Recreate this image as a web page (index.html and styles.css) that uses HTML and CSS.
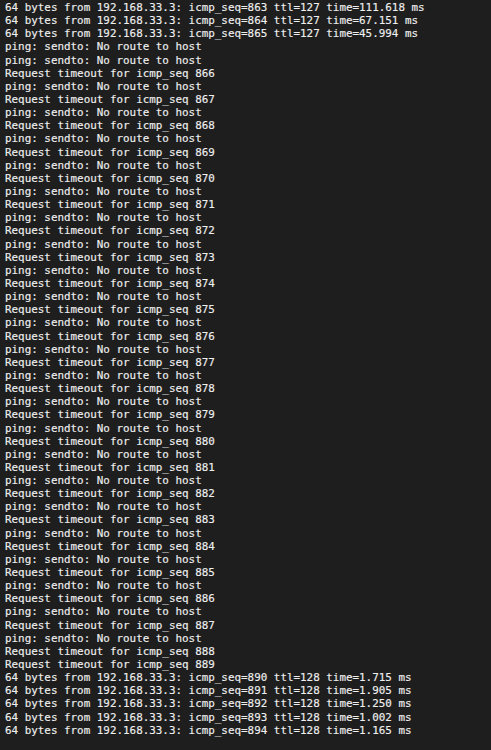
FILE: index.html
```html
<!DOCTYPE html>
<html>
<head>
<meta charset="utf-8">
<link rel="stylesheet" href="styles.css">
</head>
<body>
<pre class="term">64 bytes from 192.168.33.3: icmp_seq=863 ttl=127 time=111.618 ms
64 bytes from 192.168.33.3: icmp_seq=864 ttl=127 time=67.151 ms
64 bytes from 192.168.33.3: icmp_seq=865 ttl=127 time=45.994 ms
ping: sendto: No route to host
ping: sendto: No route to host
Request timeout for icmp_seq 866
ping: sendto: No route to host
Request timeout for icmp_seq 867
ping: sendto: No route to host
Request timeout for icmp_seq 868
ping: sendto: No route to host
Request timeout for icmp_seq 869
ping: sendto: No route to host
Request timeout for icmp_seq 870
ping: sendto: No route to host
Request timeout for icmp_seq 871
ping: sendto: No route to host
Request timeout for icmp_seq 872
ping: sendto: No route to host
Request timeout for icmp_seq 873
ping: sendto: No route to host
Request timeout for icmp_seq 874
ping: sendto: No route to host
Request timeout for icmp_seq 875
ping: sendto: No route to host
Request timeout for icmp_seq 876
ping: sendto: No route to host
Request timeout for icmp_seq 877
ping: sendto: No route to host
Request timeout for icmp_seq 878
ping: sendto: No route to host
Request timeout for icmp_seq 879
ping: sendto: No route to host
Request timeout for icmp_seq 880
ping: sendto: No route to host
Request timeout for icmp_seq 881
ping: sendto: No route to host
Request timeout for icmp_seq 882
ping: sendto: No route to host
Request timeout for icmp_seq 883
ping: sendto: No route to host
Request timeout for icmp_seq 884
ping: sendto: No route to host
Request timeout for icmp_seq 885
ping: sendto: No route to host
Request timeout for icmp_seq 886
ping: sendto: No route to host
Request timeout for icmp_seq 887
ping: sendto: No route to host
Request timeout for icmp_seq 888
Request timeout for icmp_seq 889
64 bytes from 192.168.33.3: icmp_seq=890 ttl=128 time=1.715 ms
64 bytes from 192.168.33.3: icmp_seq=891 ttl=128 time=1.905 ms
64 bytes from 192.168.33.3: icmp_seq=892 ttl=128 time=1.250 ms
64 bytes from 192.168.33.3: icmp_seq=893 ttl=128 time=1.002 ms
64 bytes from 192.168.33.3: icmp_seq=894 ttl=128 time=1.165 ms</pre>
</body>
</html>
```
FILE: styles.css
```css
html, body {
  margin: 0;
  padding: 0;
  background: #1e1e1e;
  height: 100%;
  overflow: hidden;
}
.term {
  margin: 0;
  padding: 1px 0 0 5px;
  font-family: "DejaVu Sans Mono", monospace;
  font-size: 10.9px;
  line-height: 13.14px;
  color: #efefef;
  -webkit-text-stroke: 0.15px #efefef;
  white-space: pre;
}
```
